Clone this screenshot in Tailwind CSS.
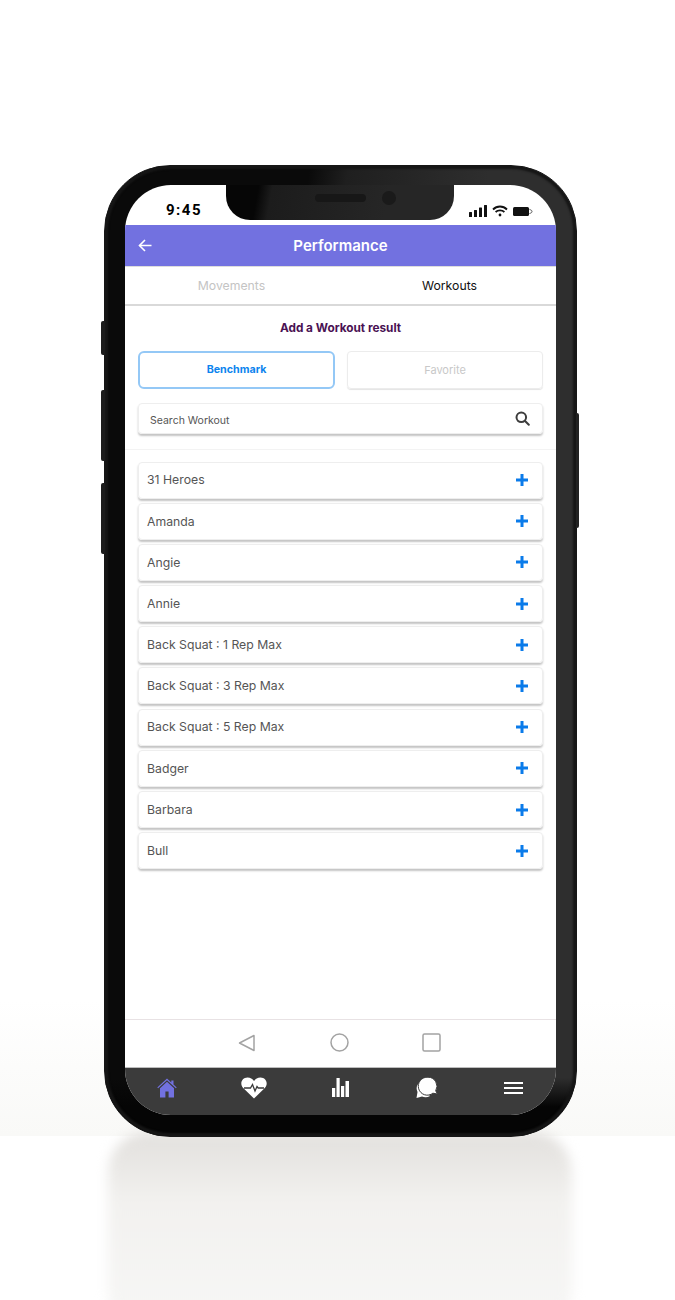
<!DOCTYPE html>
<html>
<head>
    <title>Performance</title>
    <script src="https://cdn.jsdelivr.net/npm/@tailwindcss/browser@4"></script>
</head>
<body class="bg-white font-['Inter','Roboto',sans-serif]">
    <div class="relative w-[675px] h-[1300px] overflow-hidden pt-[165px] pl-[104px]">
        <!-- Floor and reflection -->
        <div class="absolute left-0 right-0 top-[1000px] h-[136px] bg-linear-to-b from-white to-[#f9f9f7]"></div>
        <div class="absolute left-[108px] top-[1132px] w-[464px] h-[200px] rounded-[40px] blur-[6px] bg-linear-to-b from-[#e2e0dd] via-[#f2f1ef] via-35% to-[#f7f7f6]"></div>

        <!-- Phone -->
        <div class="relative w-[473px] h-[972px] rounded-[66px] pt-[19px] pl-[20px] border-[1px] border-[#161616] shadow-[inset_0_0_2px_3px_#161616] bg-[linear-gradient(to_bottom,transparent_94%,#050505_97%),linear-gradient(100deg,#0a0a0a_32%,#1f1f1f_38%,#2e2e2e_60%)]">
            <!-- Side buttons -->
            <div class="absolute left-[-4px] top-[155px] w-[4px] h-[34px] rounded-l-[2px] bg-[#1c1c1c]"></div>
            <div class="absolute left-[-4px] top-[224px] w-[4px] h-[71px] rounded-l-[2px] bg-[#1c1c1c]"></div>
            <div class="absolute left-[-4px] top-[317px] w-[4px] h-[71px] rounded-l-[2px] bg-[#1c1c1c]"></div>
            <div class="absolute right-[-3px] top-[247px] w-[3px] h-[115px] rounded-r-[2px] bg-[#222222]"></div>

            <!-- Screen -->
            <div class="relative w-[431px] h-[930px] rounded-[46px] overflow-hidden bg-white flex flex-col">
                <!-- Notch -->
                <div class="absolute left-[101px] top-0 w-[228px] h-[35px] rounded-b-[24px] bg-[linear-gradient(100deg,#060606_14%,#1c1c1c_20%,#262626_70%)] flex items-center gap-[16px] pl-[89px] pb-[9px]">
                    <div class="w-[51px] h-[8px] rounded-full bg-[#171717]"></div>
                    <div class="w-[14px] h-[14px] rounded-full bg-[#1a1a1a]"></div>
                </div>

                <!-- Status bar -->
                <div class="h-[40px] flex items-end justify-between pl-[41px] pr-[23px] pb-[6px] shrink-0">
                    <span class="font-['Roboto',sans-serif] font-bold text-[15px] leading-[18px] tracking-[1.500px] text-black">9:45</span>
                    <div class="flex items-center gap-[5px] pb-[2px]">
                        <svg width="19" height="12" viewBox="0 0 19 12" fill="#111"><rect x="0" y="7" width="3" height="5" rx=".5"/><rect x="5" y="5" width="3" height="7" rx=".5"/><rect x="10" y="2.500" width="3" height="9.500" rx=".5"/><rect x="15" y="0" width="3" height="12" rx=".5"/></svg>
                        <svg width="16" height="12" viewBox="0 0 16 12" fill="none" stroke="#111" stroke-width="1.800" class="-ml-[1px]"><path d="M1 4.500C5 .5 11 .5 15 4.500"/><path d="M3.600 7C6 4.700 10 4.700 12.400 7"/><circle cx="8" cy="10" r="1.400" fill="#111" stroke="none"/></svg>
                        <svg width="20" height="9" viewBox="0 0 20 9"><rect x="0" y="0" width="16" height="9" rx="1.500" fill="#111"/><path d="M16.500 2.500c2 .5 2.500 1.200 2.500 2s-.5 1.500-2.500 2" fill="none" stroke="#555" stroke-width="1"/></svg>
                    </div>
                </div>

                <!-- Header -->
                <div class="relative h-[41px] shrink-0 bg-[#7271e0] flex items-center justify-center pt-[2px]">
                    <svg class="absolute left-[13px] top-[14px]" width="14" height="13" viewBox="0 0 14 13" fill="none" stroke="white" stroke-width="1.600"><path d="M13.500 6.500H1.500"/><path d="M7 1L1.500 6.500L7 12"/></svg>
                    <span class="text-[15px] font-semibold text-white">Performance</span>
                </div>

                <!-- Tabs -->
                <div class="h-[39px] shrink-0 flex border-b-2 border-[#d9d9d9] mt-[1px] shadow-[0_-1px_1px_#dddddd] text-[12.250px]">
                    <div class="w-[213px] flex items-center justify-center pt-[2px] text-[#c4c4c4]">Movements</div>
                    <div class="w-[218px] flex items-center justify-center pt-[2px] pl-[5px] text-[#111111]">Workouts</div>
                </div>

                <!-- Content -->
                <div class="flex-1 flex flex-col">
                    <h2 class="text-center text-[11.800px] leading-[16px] font-bold text-[#4a1253] mt-[14px]">Add a Workout result</h2>

                    <div class="flex gap-[12px] px-[13px] mt-[15px]">
                        <div class="w-[197px] h-[38px] rounded-[6px] border-2 border-[#94c8f6] flex items-center justify-center pt-[1px] text-[10.700px] font-bold text-[#0d84ee]">Benchmark</div>
                        <div class="w-[196px] h-[38px] rounded-[4px] border-[1.500px] border-[#ececec] shadow-[0_1px_1px_#e4e4e4] flex items-center justify-center pt-[1px] text-[11px] text-[#c8c8c8]">Favorite</div>
                    </div>

                    <div class="mx-[13px] mt-[14px] w-[405px] h-[31px] rounded-[4px] border border-[#eeeeee] shadow-[0_2px_2px_#c4c4c4] flex items-center justify-between pl-[11px] pr-[12px] text-[10.500px] text-[#555555]">
                        <span class="pt-[4px]">Search Workout</span>
                        <svg width="15" height="15" viewBox="0 0 15 15" fill="none" stroke="#3d3d3d" stroke-width="2"><circle cx="6.300" cy="6.300" r="4.800"/><path d="M9.800 9.800L13.800 13.800" stroke-linecap="round"/></svg>
                    </div>

                    <div class="h-px bg-[#f3f3f3] mt-[15px]"></div>

                    <!-- Workout list -->
                    <div class="flex flex-col gap-[4.200px] px-[13px] mt-[11.500px] text-[12.250px] text-[#555555]">
                        <div class="h-[37px] rounded-[4px] border border-[#eeeeee] shadow-[0_2px_2px_#c4c4c4] flex items-center justify-between pl-[8px] pr-[14px]"><span class="pt-[1px]">31 Heroes</span><svg width="12" height="12" viewBox="0 0 12 12" fill="#0a7bea"><path d="M4.500 0h3v4.500H12v3H7.500V12h-3V7.500H0v-3h4.500z"/></svg></div>
                        <div class="h-[37px] rounded-[4px] border border-[#eeeeee] shadow-[0_2px_2px_#c4c4c4] flex items-center justify-between pl-[8px] pr-[14px]"><span class="pt-[1px]">Amanda</span><svg width="12" height="12" viewBox="0 0 12 12" fill="#0a7bea"><path d="M4.500 0h3v4.500H12v3H7.500V12h-3V7.500H0v-3h4.500z"/></svg></div>
                        <div class="h-[37px] rounded-[4px] border border-[#eeeeee] shadow-[0_2px_2px_#c4c4c4] flex items-center justify-between pl-[8px] pr-[14px]"><span class="pt-[1px]">Angie</span><svg width="12" height="12" viewBox="0 0 12 12" fill="#0a7bea"><path d="M4.500 0h3v4.500H12v3H7.500V12h-3V7.500H0v-3h4.500z"/></svg></div>
                        <div class="h-[37px] rounded-[4px] border border-[#eeeeee] shadow-[0_2px_2px_#c4c4c4] flex items-center justify-between pl-[8px] pr-[14px]"><span class="pt-[1px]">Annie</span><svg width="12" height="12" viewBox="0 0 12 12" fill="#0a7bea"><path d="M4.500 0h3v4.500H12v3H7.500V12h-3V7.500H0v-3h4.500z"/></svg></div>
                        <div class="h-[37px] rounded-[4px] border border-[#eeeeee] shadow-[0_2px_2px_#c4c4c4] flex items-center justify-between pl-[8px] pr-[14px]"><span class="pt-[1px]">Back Squat : 1 Rep Max</span><svg width="12" height="12" viewBox="0 0 12 12" fill="#0a7bea"><path d="M4.500 0h3v4.500H12v3H7.500V12h-3V7.500H0v-3h4.500z"/></svg></div>
                        <div class="h-[37px] rounded-[4px] border border-[#eeeeee] shadow-[0_2px_2px_#c4c4c4] flex items-center justify-between pl-[8px] pr-[14px]"><span class="pt-[1px]">Back Squat : 3 Rep Max</span><svg width="12" height="12" viewBox="0 0 12 12" fill="#0a7bea"><path d="M4.500 0h3v4.500H12v3H7.500V12h-3V7.500H0v-3h4.500z"/></svg></div>
                        <div class="h-[37px] rounded-[4px] border border-[#eeeeee] shadow-[0_2px_2px_#c4c4c4] flex items-center justify-between pl-[8px] pr-[14px]"><span class="pt-[1px]">Back Squat : 5 Rep Max</span><svg width="12" height="12" viewBox="0 0 12 12" fill="#0a7bea"><path d="M4.500 0h3v4.500H12v3H7.500V12h-3V7.500H0v-3h4.500z"/></svg></div>
                        <div class="h-[37px] rounded-[4px] border border-[#eeeeee] shadow-[0_2px_2px_#c4c4c4] flex items-center justify-between pl-[8px] pr-[14px]"><span class="pt-[1px]">Badger</span><svg width="12" height="12" viewBox="0 0 12 12" fill="#0a7bea"><path d="M4.500 0h3v4.500H12v3H7.500V12h-3V7.500H0v-3h4.500z"/></svg></div>
                        <div class="h-[37px] rounded-[4px] border border-[#eeeeee] shadow-[0_2px_2px_#c4c4c4] flex items-center justify-between pl-[8px] pr-[14px]"><span class="pt-[1px]">Barbara</span><svg width="12" height="12" viewBox="0 0 12 12" fill="#0a7bea"><path d="M4.500 0h3v4.500H12v3H7.500V12h-3V7.500H0v-3h4.500z"/></svg></div>
                        <div class="h-[37px] rounded-[4px] border border-[#eeeeee] shadow-[0_2px_2px_#c4c4c4] flex items-center justify-between pl-[8px] pr-[14px]"><span class="pt-[1px]">Bull</span><svg width="12" height="12" viewBox="0 0 12 12" fill="#0a7bea"><path d="M4.500 0h3v4.500H12v3H7.500V12h-3V7.500H0v-3h4.500z"/></svg></div>
                    </div>
                </div>

                <!-- Android nav -->
                <div class="h-[48px] shrink-0 border-t border-[#e8e2e4] flex items-center pl-[113px] pb-[2px]">
                    <svg width="18" height="18" viewBox="0 0 18 18" fill="none" stroke="#a3a3a3" stroke-width="1.500" stroke-linejoin="round"><path d="M1.500 9L16 1.500V16.500Z"/></svg>
                    <svg class="ml-[74px]" width="19" height="19" viewBox="0 0 19 19" fill="none" stroke="#a3a3a3" stroke-width="1.500"><circle cx="9.500" cy="9.500" r="8.500"/></svg>
                    <svg class="ml-[73px]" width="19" height="19" viewBox="0 0 19 19" fill="none" stroke="#a3a3a3" stroke-width="1.500"><rect x="1" y="1" width="17" height="17" rx="1.500"/></svg>
                </div>

                <!-- Bottom tab bar -->
                <div class="h-[48px] shrink-0 bg-[#3b3b3b] border-t border-[#bdbdbd] flex items-center pl-[32px] pb-[8px]">
                    <svg width="20" height="20" viewBox="0 0 20 20" fill="#7271e0"><path d="M10 .5L.3 9.500l.8.8L10 2.300l8.900 8 .8-.8L16.500 6.600V2.500h-2.200v2z"/><path d="M10 3.800L3 10.200V19.500h5.400v-6h3.200v6H17V10.200z"/></svg>
                    <svg class="ml-[64px]" width="26" height="22" viewBox="0 0 26 22"><path d="M13 21.500L2.200 11C-1.800 6.600 1 .5 6.500.5c2.900 0 5 1.500 6.500 3.500C14.500 2 16.600.5 19.500.5 25 .5 27.800 6.600 23.800 11z" fill="white"/><path d="M3 11H9.500L11.500 7.500L14 14L16 9.500L17.200 11H23" fill="none" stroke="#3b3b3b" stroke-width="1.300"/></svg>
                    <svg class="ml-[65px]" width="17" height="19" viewBox="0 0 17 19" fill="white"><rect x="0" y="10" width="3.200" height="9"/><rect x="4.500" y="0" width="3.200" height="19"/><rect x="9" y="8" width="3.200" height="11"/><rect x="13.500" y="3" width="3.500" height="16"/></svg>
                    <svg class="ml-[67px]" width="22" height="21" viewBox="0 0 22 21"><path d="M4 5A8.500 8.500 0 0 0 1.500 15L.5 21L6 19.500A8.500 8.500 0 0 0 14 19L8 12z" fill="white"/><path d="M12 .2a9 9 0 0 1 7.700 13.600l1.800 3.200-4.600-.8A9 9 0 1 1 12 .2z" fill="white" stroke="#3b3b3b" stroke-width="1"/></svg>
                    <svg class="ml-[66px]" width="19" height="12" viewBox="0 0 19 12" fill="white"><rect width="19" height="2"/><rect y="5" width="19" height="2"/><rect y="10" width="19" height="2"/></svg>
                </div>
            </div>
        </div>
    </div>
</body>
</html>
